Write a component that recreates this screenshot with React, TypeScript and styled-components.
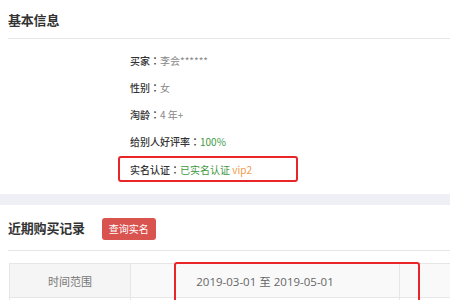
import React from "react";
import styled, { createGlobalStyle } from "styled-components";

const Global = createGlobalStyle`
  html, body { margin: 0; padding: 0; background: #fff; }
  body { font-family: "Microsoft YaHei", "Noto Sans CJK SC", "Noto Sans", sans-serif; width: 450px; height: 300px; overflow: hidden; }
`;

const Page = styled.div`
  width: 450px;
  height: 300px;
  overflow: hidden;
  background: #fff;
`;

const Section = styled.section`
  padding-left: 8px;
`;

const TitleBar = styled.div<{ $h: number }>`
  height: ${(p) => p.$h}px;
  display: flex;
  align-items: center;
  gap: 17px;
  border-bottom: 1px solid #e6e6e6;
  box-sizing: border-box;
`;

const Title = styled.h2`
  margin: 0;
  font-size: 13px;
  font-weight: 700;
  color: #333;
  letter-spacing: -0.2px;
`;

const InfoList = styled.div`
  padding: 8px 0 0 130px;
  display: flex;
  flex-direction: column;
  align-items: flex-start;
`;

const InfoRow = styled.div<{ $boxed?: boolean }>`
  display: flex;
  align-items: center;
  font-size: 10px;
  padding-left: ${(p) => (p.$boxed ? "10px" : "0")};
  margin-left: ${(p) => (p.$boxed ? "-12px" : "0")};
  width: ${(p) => (p.$boxed ? "166px" : "auto")};
  border: ${(p) => (p.$boxed ? "2px solid #e8262a" : "none")};
  border-radius: ${(p) => (p.$boxed ? "3px" : "0")};
  height: ${(p) => (p.$boxed ? "22px" : "27px")};
  margin-top: ${(p) => (p.$boxed ? "1px" : "0")};
`;

const Label = styled.span`
  color: #333;
  font-weight: 500;
`;

const Colon = styled.span`
  font-family: "Noto Sans CJK TC", "Noto Sans CJK SC", sans-serif;
  color: #333;
  font-weight: 500;
`;

const Value = styled.span<{ $color?: string }>`
  color: ${(p) => p.$color || "#888"};
`;

const Band = styled.div`
  height: 11px;
  background: #eef0f6;
  margin-top: 12px;
`;

const Button = styled.button`
  width: 54px;
  height: 22px;
  border: none;
  border-radius: 3px;
  background: #d9534f;
  color: #fff;
  font-family: inherit;
  font-size: 10px;
  padding: 0;
  margin-top: 2px;
`;

const TableWrap = styled.div`
  position: relative;
  margin: 12px 0 0 9px;
`;

const Table = styled.div`
  display: grid;
  grid-template-columns: 121px 269px 60px;
  border-top: 1px solid #e6e6e6;
  border-left: 1px solid #e6e6e6;
`;

const Cell = styled.div<{ $bg?: string }>`
  height: 34px;
  display: flex;
  align-items: center;
  justify-content: center;
  background: ${(p) => p.$bg || "#f8f8f8"};
  border-right: 1px solid #e6e6e6;
  border-bottom: 1px solid #e6e6e6;
  color: #777;
  font-size: 11px;
  box-sizing: border-box;
`;

const DateText = styled.span`
  font-family: "Open Sans", "Noto Sans CJK SC", sans-serif;
  font-size: 11.5px;
  color: #666;
`;

const Highlight = styled.div`
  position: absolute;
  left: 165px;
  top: -1px;
  width: 242px;
  height: 60px;
  border: 2px solid #e8262a;
  border-radius: 3px;
  pointer-events: none;
`;

const rows: { label: string; value: string; color?: string }[] = [
  { label: "买家", value: "李会******" },
  { label: "性别", value: "女" },
  { label: "淘龄", value: "4 年+" },
  { label: "给别人好评率", value: "100%", color: "#3f9a3f" },
];

export default function App() {
  return (
    <Page>
      <Global />
      <Section>
        <TitleBar $h={39}>
          <Title>基本信息</Title>
        </TitleBar>
      </Section>
      <InfoList>
        {rows.map((r) => (
          <InfoRow key={r.label}>
            <Label>{r.label}</Label>
            <Colon>：</Colon>
            <Value $color={r.color}>{r.value}</Value>
          </InfoRow>
        ))}
        <InfoRow $boxed>
          <Label>实名认证</Label>
          <Colon>：</Colon>
          <Value $color="#3f9a3f">已实名认证</Value>
          <Value $color="#f19b4b">&nbsp;vip2</Value>
        </InfoRow>
      </InfoList>
      <Band />
      <Section>
        <TitleBar $h={46}>
          <Title>近期购买记录</Title>
          <Button>查询实名</Button>
        </TitleBar>
      </Section>
      <TableWrap>
        <Table>
          <Cell $bg="#f5f5f5">时间范围</Cell>
          <Cell $bg="#f9f9f9">
            <DateText>2019-03-01 至 2019-05-01</DateText>
          </Cell>
          <Cell $bg="#f9f9f9" />
          <Cell $bg="#fff" />
          <Cell $bg="#fff" />
          <Cell $bg="#fff" />
        </Table>
        <Highlight />
      </TableWrap>
    </Page>
  );
}
